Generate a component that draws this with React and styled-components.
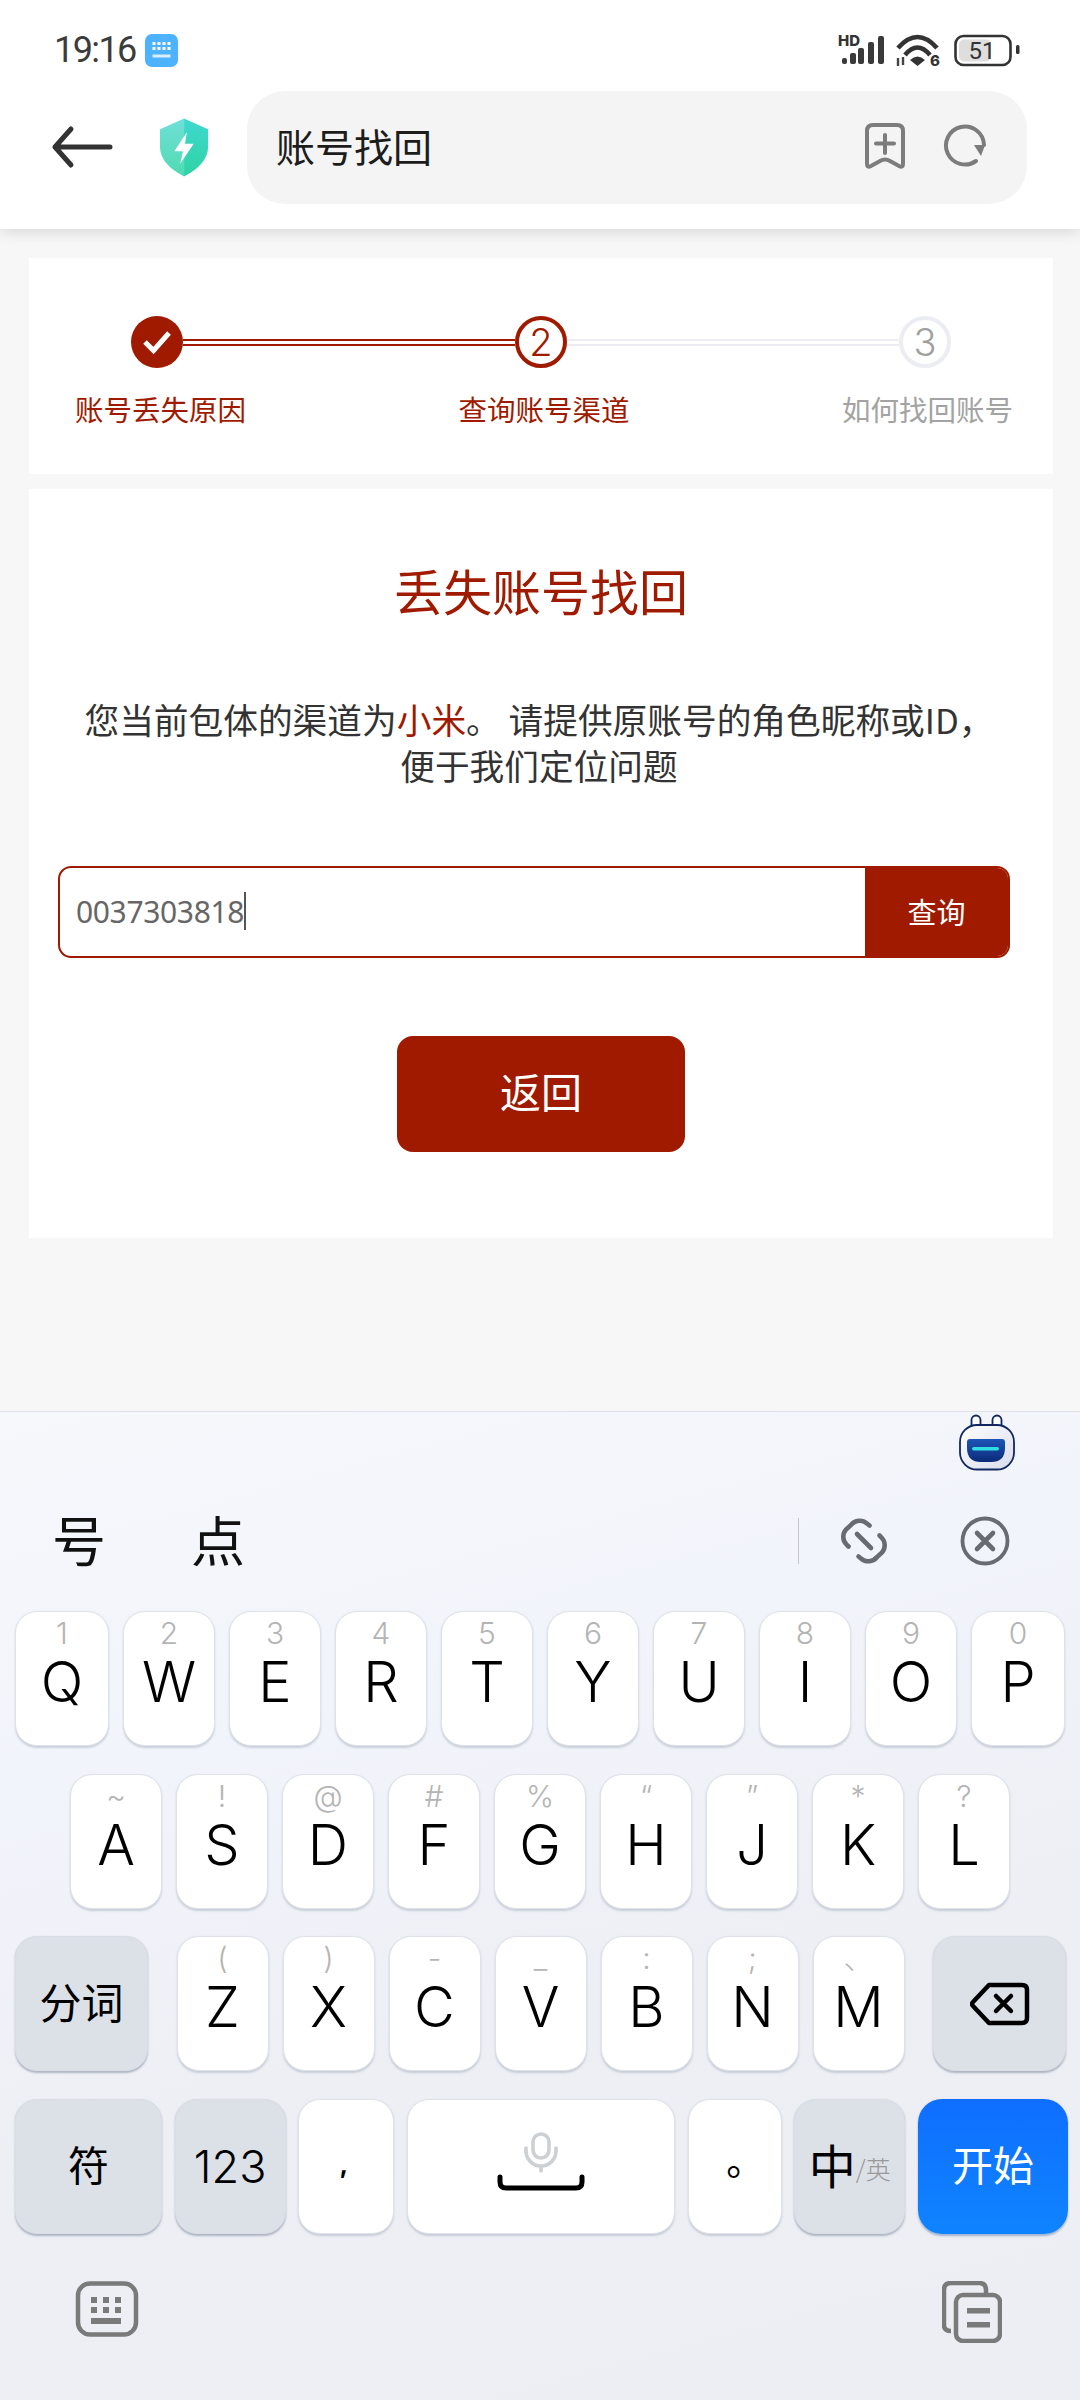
import React from "react";
import styled, { createGlobalStyle, css } from "styled-components";

const RED = "#a01a00";
const CJK = `"Noto Sans CJK SC", "Noto Sans", sans-serif`;
const LATIN = `Inter, "Noto Sans CJK SC", sans-serif`;

const Global = createGlobalStyle`
  html, body { margin: 0; padding: 0; background: #f7f7f7; }
  * { box-sizing: border-box; }
`;

const Screen = styled.div`
  width: 1080px;
  height: 2400px;
  display: flex;
  flex-direction: column;
  overflow: hidden;
  font-family: ${CJK};
  font-weight: 400;
  background: #f7f7f7;
`;

const Header = styled.header`
  height: 229px;
  flex: none;
  background: #fff;
  box-shadow: 0 3px 14px rgba(0, 0, 0, 0.13);
  position: relative;
  z-index: 1;
`;

const StatusBar = styled.div`
  height: 91px;
  display: flex;
  justify-content: space-between;
  align-items: flex-start;
  padding: 25px 50px 0 54px;
`;

const StatusLeft = styled.div`
  display: flex;
  align-items: center;
  gap: 9px;
  height: 50px;
`;

const Clock = styled.span`
  font-family: Roboto, sans-serif;
  font-weight: 400;
  font-size: 36px;
  letter-spacing: -1.6px;
  color: #3c3c3c;
  line-height: 50px;
`;

const ToolBar = styled.div`
  height: 138px;
  display: flex;
  align-items: flex-start;
  padding-left: 50px;
  padding-right: 53px;
`;

const BackIcon = styled.svg`
  width: 64px;
  height: 44px;
  margin-top: 34px;
  flex: none;
`;

const ShieldIcon = styled.svg`
  width: 52px;
  height: 59px;
  margin: 27px 36px 0 45px;
  flex: none;
`;

const AddressPill = styled.div`
  flex: 1;
  height: 113px;
  background: #f4f4f4;
  border-radius: 38px;
  display: flex;
  align-items: center;
  padding: 0 40px 0 29px;
`;

const PageTitle = styled.span`
  flex: 1;
  font-size: 39px;
  color: #1c1c1c;
  margin-bottom: 5px;
`;

const PillIcon = styled.svg`
  flex: none;
  margin-left: ${(p) => p.$gap || 0}px;
  margin-bottom: 3px;
`;

const Page = styled.main`
  height: 1182px;
  flex: none;
  padding: 29px 27px 0 29px;
  display: flex;
  flex-direction: column;
  gap: 15px;
`;

const Card = styled.section`
  background: #fff;
`;

const StepCard = styled(Card)`
  height: 216px;
  padding: 58px 40px 0 46px;
`;

const Track = styled.div`
  display: flex;
  align-items: center;
  margin: 0 62px 21px 56px;
`;

const StepDot = styled.div`
  width: 52px;
  height: 52px;
  border-radius: 50%;
  flex: none;
  display: flex;
  align-items: center;
  justify-content: center;
  font-family: Inter, sans-serif;
  font-size: 38px;
  font-weight: 300;
  ${(p) =>
    p.$state === "done" &&
    css`
      background: ${RED};
    `}
  ${(p) =>
    p.$state === "current" &&
    css`
      border: 4px solid ${RED};
      color: ${RED};
    `}
  ${(p) =>
    p.$state === "todo" &&
    css`
      border: 4px solid #ecedf2;
      color: #a0a0a0;
    `}
`;

const Connector = styled.div`
  flex: 1;
  height: 7px;
  background: #fff;
  border-top: 2px solid ${(p) => (p.$active ? RED : "#ecedf2")};
  border-bottom: 2px solid ${(p) => (p.$active ? RED : "#ecedf2")};
`;

const StepLabels = styled.div`
  display: flex;
  justify-content: space-between;
`;

const StepLabel = styled.span`
  font-size: 28.5px;
  line-height: 40px;
  color: ${(p) => (p.$active ? RED : "#a3a3a3")};
`;

const FormCard = styled(Card)`
  height: 749px;
  padding: 71px 43px 0 29px;
  display: flex;
  flex-direction: column;
`;

const FormTitle = styled.h1`
  margin: 0;
  font-size: 49px;
  line-height: 60px;
  font-weight: 400;
  color: ${RED};
  text-align: center;
  padding-left: 14px;
`;

const Notice = styled.p`
  margin: 76px 0 78px;
  font-size: 34.7px;
  line-height: 46px;
  color: #333;
  text-align: center;
  padding-left: 10px;
  white-space: nowrap;
`;

const Accent = styled.span`
  color: ${RED};
`;

const SearchRow = styled.div`
  display: flex;
  height: 92px;
  border: 2px solid ${RED};
  border-radius: 13px;
  overflow: hidden;
`;

const SearchField = styled.div`
  flex: 1;
  display: flex;
  align-items: center;
  padding: 0 0 2px 16px;
  font-size: 30px;
  font-family: "Noto Sans", sans-serif;
  font-weight: 400;
  color: #666;
  letter-spacing: -0.35px;
`;

const Caret = styled.span`
  width: 2px;
  height: 38px;
  background: #555;
  margin-left: 0;
`;

const SearchButton = styled.div`
  width: 143px;
  background: ${RED};
  color: #fff;
  font-size: 29px;
  padding-bottom: 3px;
  display: flex;
  align-items: center;
  justify-content: center;
`;

const BackButton = styled.div`
  width: 288px;
  height: 116px;
  margin: 78px 0 0 339px;
  border-radius: 16px;
  background: ${RED};
  color: #fff;
  font-size: 41px;
  padding-bottom: 8px;
  display: flex;
  align-items: center;
  justify-content: center;
`;

const Keyboard = styled.div`
  flex: 1;
  border-top: 1px solid #dfe1e8;
  background: linear-gradient(165deg, #f6f8fc 0%, #f1f4fa 30%, #edeff5 60%, #eceef3 100%);
  display: flex;
  flex-direction: column;
`;

const AssistantRow = styled.div`
  height: 59px;
  display: flex;
  justify-content: flex-end;
  padding: 2px 65px 0 0;
`;

const CandidateRow = styled.div`
  height: 140px;
  display: flex;
  align-items: center;
  padding: 0 70px 0 52px;
`;

const Candidate = styled.span`
  font-size: 54px;
  color: #111;
  margin-right: ${(p) => p.$gap}px;
  margin-bottom: 6px;
`;

const Divider = styled.div`
  width: 1px;
  height: 46px;
  margin-left: auto;
  background: #c4c6cc;
`;

const ActionSlot = styled.div`
  flex: none;
  margin-left: ${(p) => p.$gap}px;
`;

const KeyRows = styled.div`
  display: flex;
  flex-direction: column;
  gap: 27.67px;
`;

const KeyRow = styled.div`
  display: flex;
  height: 135px;
  padding: ${(p) => p.$pad || "0 15px"};
  gap: ${(p) => p.$gap ?? 14}px;
  justify-content: ${(p) => p.$justify || "flex-start"};
`;

const LetterGroup = styled.div`
  display: flex;
  gap: 14px;
`;

const keyBase = css`
  flex: none;
  width: ${(p) => p.$w || 92}px;
  border-radius: 22px;
  display: flex;
  flex-direction: column;
  align-items: center;
  color: #000;
`;

const LetterKey = styled.div`
  ${keyBase}
  background: #fff;
  border: 1px solid #dfe2e8;
  box-shadow: 0 1.5px 2px rgba(130, 140, 160, 0.35);
  padding-top: 3px;
`;

const Hint = styled.span`
  font-family: ${LATIN};
  font-weight: 300;
  font-size: 30px;
  line-height: 36px;
  height: 36px;
  color: #b4b4b4;
`;

const Letter = styled.span`
  font-family: ${LATIN};
  font-weight: 300;
  font-size: 56px;
  line-height: 62px;
`;

const CenterKey = styled.div`
  ${keyBase}
  justify-content: center;
  background: ${(p) => (p.$fn ? "#dce0e7" : "#fff")};
  border: 1px solid ${(p) => (p.$fn ? "#d9dde5" : "#dfe2e8")};
  box-shadow: 0 1.5px 2px rgba(130, 140, 160, ${(p) => (p.$fn ? 0.6 : 0.35)});
`;

const KeyLabel = styled.span`
  font-size: ${(p) => p.$size}px;
  margin-bottom: 6px;
`;

const NumberLabel = styled.span`
  font-family: ${LATIN};
  font-weight: 350;
  font-size: 45px;
`;

const Punct = styled.span`
  font-family: ${(p) => (p.$tc ? `"Noto Sans CJK TC", sans-serif` : LATIN)};
  font-size: ${(p) => p.$size}px;
  font-weight: ${(p) => (p.$tc ? 400 : 700)};
  line-height: 1;
  margin: ${(p) => p.$offset || 0};
`;

const LangKey = styled(CenterKey)`
  flex-direction: row;
  align-items: center;
`;

const LangMain = styled.span`
  font-size: 47px;
  margin-bottom: 6px;
`;

const LangAlt = styled.span`
  font-size: 25px;
  font-weight: 300;
  color: #999;
  margin-top: 4px;
`;

const GoKey = styled.div`
  ${keyBase}
  background: linear-gradient(180deg, #0f6eff, #0f84ff);
  box-shadow: 0 1.5px 2px rgba(90, 120, 170, 0.5);
  color: #fff;
  font-size: 41px;
  padding-bottom: 6px;
  justify-content: center;
  border-radius: 24px;
`;

const BottomBar = styled.div`
  flex: 1;
  display: flex;
  justify-content: space-between;
  align-items: flex-start;
  padding: 47px 78px 0 75px;
`;

const Icon = styled.svg`
  flex: none;
  display: block;
`;

const KeyboardBadge = () => (
  <Icon width="33" height="33" viewBox="0 0 33 33">
    <rect width="33" height="33" rx="7" fill="#4db2ff" />
    {[7.5, 12.5, 17.5, 22.5].map((x) =>
      [8, 13].map((y) => <rect key={`${x}-${y}`} x={x} y={y} width="3" height="3" fill="#fff" />)
    )}
    <rect x="7.5" y="20.5" width="18" height="3" fill="#d8efff" />
  </Icon>
);

const StatusIcons = () => (
  <Icon width="205" height="50" viewBox="0 0 205 50">
    <text x="13" y="21" fontFamily="Inter, sans-serif" fontWeight="800" fontSize="15" fill="#333">HD</text>
    <g fill="#3a3a3a">
      <rect x="17" y="33" width="5" height="6" rx="2" />
      <rect x="25" y="28" width="6" height="11" rx="2" />
      <rect x="33" y="23" width="6" height="16" rx="2" />
      <rect x="43" y="17" width="6" height="22" rx="2" />
      <rect x="53" y="11" width="6" height="28" rx="2" />
    </g>
    <g fill="none" stroke="#333" strokeWidth="4.6">
      <path d="M73 23Q92.500 1 112 23" />
      <path d="M80 30Q92.500 15 105 30" />
    </g>
    <path d="M85 35Q92.500 28 100 35L92.500 41z" fill="#333" />
    <path d="M73 33v8M78 32v8" stroke="#444" strokeWidth="2.400" />
    <text x="105" y="41" fontFamily="Inter, sans-serif" fontWeight="800" fontSize="15" fill="#333">6</text>
    <rect x="130.500" y="11" width="55" height="29" rx="8" fill="none" stroke="#333" strokeWidth="2.600" />
    <rect x="134" y="14.500" width="32" height="22" rx="5" fill="#dedede" />
    <text x="157" y="33.500" textAnchor="middle" fontFamily="Roboto, sans-serif" fontSize="24" fill="#333">51</text>
    <rect x="191" y="20" width="3.500" height="9" rx="1.500" fill="#333" />
  </Icon>
);

const Check = () => (
  <Icon width="32" height="26" viewBox="0 0 32 26">
    <path d="M4 13l8.500 8.500L28 4" fill="none" stroke="#fff" strokeWidth="5" />
  </Icon>
);

const Robot = () => (
  <Icon width="56" height="57" viewBox="0 0 56 57">
    <defs>
      <linearGradient id="robotFace" x1="0" y1="0" x2="0" y2="1">
        <stop offset="0" stopColor="#1d55b8" />
        <stop offset="1" stopColor="#0c2a78" />
      </linearGradient>
      <linearGradient id="robotShell" x1="0" y1="0" x2="1" y2="1">
        <stop offset="0" stopColor="#fff" />
        <stop offset="1" stopColor="#d9dcec" />
      </linearGradient>
    </defs>
    <path d="M12.500 15V6a4.500 4.500 0 0 1 9 0v8M33.500 14V6a4.500 4.500 0 0 1 9 0v9" fill="#fff" stroke="#13275f" strokeWidth="1.800" />
    <rect x="1" y="11" width="54" height="44.500" rx="17" fill="url(#robotShell)" stroke="#13275f" strokeWidth="1.800" />
    <path d="M8 28q0-3 3-3h32q3 0 3 3v6q0 14-14 14H22Q8 48 8 34z" fill="url(#robotFace)" />
    <rect x="13" y="33" width="27" height="3.400" rx="1.700" fill="#30dfe6" />
  </Icon>
);

const LinkIcon = () => (
  <Icon width="48" height="48" viewBox="0 0 48 48">
    <g fill="none" stroke="#686c72" strokeWidth="4.600" strokeLinecap="round">
      <path d="M29.500 8.500l-2.500-2a11 11 0 0 0-16 1.500L6 12.500a11 11 0 0 0 .5 15l2 2" />
      <path d="M18.500 39.500l2.500 2a11 11 0 0 0 16-1.500l5-4.500a11 11 0 0 0-.5-15l-2-2" />
      <path d="M17 17l14 14" />
    </g>
  </Icon>
);

const CloseCircle = () => (
  <Icon width="50" height="50" viewBox="0 0 50 50">
    <circle cx="25" cy="25" r="22.500" fill="none" stroke="#686c72" strokeWidth="3.800" />
    <path d="M17 17l16 16M33 17L17 33" stroke="#686c72" strokeWidth="4.600" strokeLinecap="round" />
  </Icon>
);

const TOP_ROW = [["Q", "1"], ["W", "2"], ["E", "3"], ["R", "4"], ["T", "5"], ["Y", "6"], ["U", "7"], ["I", "8"], ["O", "9"], ["P", "0"]];
const MID_ROW = [["A", "~"], ["S", "!"], ["D", "@"], ["F", "#"], ["G", "%"], ["H", "“"], ["J", "”"], ["K", "*"], ["L", "?"]];
const LOW_ROW = [["Z", "("], ["X", ")"], ["C", "-"], ["V", "_"], ["B", ":"], ["N", ";"], ["M", "、"]];

const renderKey = ([l, h], w) => (
  <LetterKey key={l} $w={w}>
    <Hint>{h}</Hint>
    <Letter>{l}</Letter>
  </LetterKey>
);

export default function App() {
  return (
    <Screen>
      <Global />
      <Header>
        <StatusBar>
          <StatusLeft>
            <Clock>19:16</Clock>
            <KeyboardBadge />
          </StatusLeft>
          <StatusIcons />
        </StatusBar>
        <ToolBar>
          <BackIcon viewBox="0 0 64 44">
            <path d="M60 22H5M21 4L5 22l16 18" fill="none" stroke="#333" strokeWidth="5" strokeLinecap="round" strokeLinejoin="round" />
          </BackIcon>
          <ShieldIcon viewBox="0 0 54 60">
            <defs>
              <linearGradient id="shL" x1="0" y1="0" x2="0" y2="1">
                <stop offset="0" stopColor="#6fdfd8" />
                <stop offset="1" stopColor="#50dbb0" />
              </linearGradient>
              <linearGradient id="shR" x1="0" y1="0" x2="0" y2="1">
                <stop offset="0" stopColor="#3fd8d0" />
                <stop offset="1" stopColor="#2ed3a4" />
              </linearGradient>
            </defs>
            <path d="M26 0L1 11v19q1 18 25 30z" fill="url(#shL)" />
            <path d="M26 0l25 11v19q-1 18-25 30z" fill="url(#shR)" />
            <path d="M29 14L16 34h9l-3 13 14-21h-9z" fill="#fff" />
          </ShieldIcon>
          <AddressPill>
            <PageTitle>账号找回</PageTitle>
            <PillIcon width="42" height="48" viewBox="0 0 42 48">
              <path d="M9 3h24q6 0 6 6v33q0 4-4 2l-9-5q-5-3-10 0l-9 5q-4 2-4-2V9q0-6 6-6z" fill="none" stroke="#7c7c7c" strokeWidth="4" />
              <path d="M21 13v18M12 21.500h18" stroke="#7c7c7c" strokeWidth="4" strokeLinecap="round" />
            </PillIcon>
            <PillIcon $gap={37} width="44" height="44" viewBox="0 0 44 44">
              <path d="M33 37a19 19 0 1 1 8-16" fill="none" stroke="#7c7c7c" strokeWidth="4" strokeLinecap="round" />
              <path d="M31 21h11l-4 11z" fill="#7c7c7c" />
            </PillIcon>
          </AddressPill>
        </ToolBar>
      </Header>
      <Page>
        <StepCard>
          <Track>
            <StepDot $state="done"><Check /></StepDot>
            <Connector $active />
            <StepDot $state="current">2</StepDot>
            <Connector />
            <StepDot $state="todo">3</StepDot>
          </Track>
          <StepLabels>
            <StepLabel $active>账号丢失原因</StepLabel>
            <StepLabel $active>查询账号渠道</StepLabel>
            <StepLabel>如何找回账号</StepLabel>
          </StepLabels>
        </StepCard>
        <FormCard>
          <FormTitle>丢失账号找回</FormTitle>
          <Notice>
            您当前包体的渠道为<Accent>小米</Accent>。 请提供原账号的角色昵称或ID，
            <br />
            便于我们定位问题
          </Notice>
          <SearchRow>
            <SearchField>
              0037303818
              <Caret />
            </SearchField>
            <SearchButton>查询</SearchButton>
          </SearchRow>
          <BackButton>返回</BackButton>
        </FormCard>
      </Page>
      <Keyboard>
        <AssistantRow>
          <Robot />
        </AssistantRow>
        <CandidateRow>
          <Candidate $gap={85}>号</Candidate>
          <Candidate $gap={0}>点</Candidate>
          <Divider />
          <ActionSlot $gap={41}><LinkIcon /></ActionSlot>
          <ActionSlot $gap={72}><CloseCircle /></ActionSlot>
        </CandidateRow>
        <KeyRows>
          <KeyRow>{TOP_ROW.map((k, i) => renderKey(k, i === 0 || i === 9 ? 94 : 92))}</KeyRow>
          <KeyRow $pad="0 0 0 70px">{MID_ROW.map((k) => renderKey(k))}</KeyRow>
          <KeyRow $justify="space-between" $gap={0} $pad="0 14px 0 15px">
            <CenterKey $fn $w={133}><KeyLabel $size={42}>分词</KeyLabel></CenterKey>
            <LetterGroup>{LOW_ROW.map((k) => renderKey(k))}</LetterGroup>
            <CenterKey $fn $w={133}>
              <Icon width="60" height="44" viewBox="0 0 60 44">
                <path d="M19 3h33q5 0 5 5v28q0 5-5 5H19L3 24q-2-2 0-4z" fill="none" stroke="#000" strokeWidth="4.500" strokeLinejoin="round" />
                <path d="M26 14l15 15M41 14L26 29" stroke="#000" strokeWidth="4.500" strokeLinecap="round" />
              </Icon>
            </CenterKey>
          </KeyRow>
          <KeyRow $justify="space-between" $gap={0} $pad="0 12px 0 15px">
            <CenterKey $fn $w={147}><KeyLabel $size={41}>符</KeyLabel></CenterKey>
            <CenterKey $fn $w={111}><NumberLabel>123</NumberLabel></CenterKey>
            <CenterKey $w={96}><Punct $size={26} $offset="0 5px 4px 0">,</Punct></CenterKey>
            <CenterKey $w={268}>
              <Icon width="92" height="70" viewBox="0 0 92 70">
                <rect x="38" y="3" width="16" height="24" rx="8" fill="none" stroke="#cdd0d3" strokeWidth="3.600" />
                <path d="M31 17v3a15 15 0 0 0 30 0v-3M46 35v5" fill="none" stroke="#cdd0d3" strokeWidth="3.600" strokeLinecap="round" />
                <path d="M5 46v5q0 6 6 6h70q6 0 6-6v-5" fill="none" stroke="#000" strokeWidth="5" strokeLinecap="round" />
              </Icon>
            </CenterKey>
            <CenterKey $w={94}><Punct $tc $size={38} $offset="8px 2px 0 0">。</Punct></CenterKey>
            <LangKey $fn $w={111}>
              <LangMain>中</LangMain>
              <LangAlt>/英</LangAlt>
            </LangKey>
            <GoKey $w={150}>开始</GoKey>
          </KeyRow>
        </KeyRows>
        <BottomBar>
          <Icon width="64" height="56" viewBox="0 0 64 56">
            <rect x="3" y="2.500" width="58" height="51" rx="12" fill="none" stroke="#7a7a7a" strokeWidth="4.500" />
            {[16, 28, 40].map((x) =>
              [16, 26].map((y) => <rect key={`${x}${y}`} x={x} y={y} width="6" height="6" fill="#7a7a7a" />)
            )}
            <rect x="16" y="37" width="30" height="6" fill="#7a7a7a" />
          </Icon>
          <Icon width="60" height="62" viewBox="0 0 60 62">
            <path d="M9 50q-7 0-7-6V9q0-7 7-7h28q7 0 7 7v5" fill="none" stroke="#7a7a7a" strokeWidth="4.500" />
            <rect x="14" y="14" width="44" height="46" rx="7" fill="#eceef3" stroke="#7a7a7a" strokeWidth="4.500" />
            <rect x="25" y="27" width="23" height="5.500" fill="#7a7a7a" />
            <rect x="25" y="41" width="23" height="5.500" fill="#7a7a7a" />
          </Icon>
        </BottomBar>
      </Keyboard>
    </Screen>
  );
}
